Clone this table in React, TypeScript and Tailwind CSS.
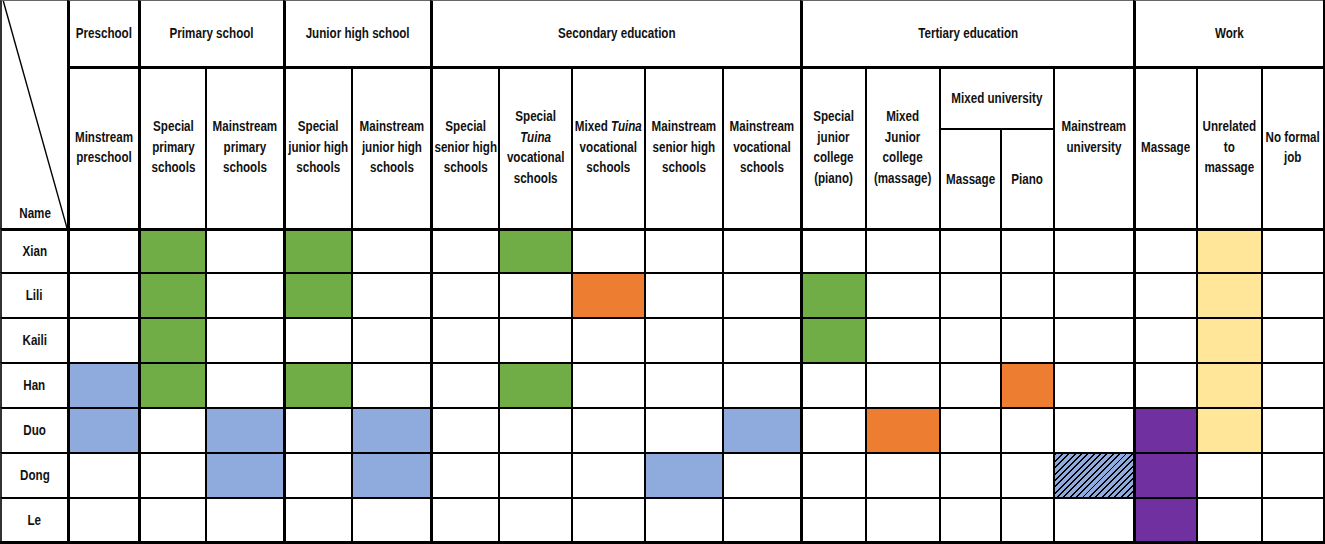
import React from "react";

const VL = [
  "border-l-2 border-l-[#333]",
  "border-l-[3px]",
  "border-l-[3px]",
  "border-l-2",
  "border-l-[3px]",
  "border-l-2",
  "border-l-[3px]",
  "border-l-2",
  "border-l-2",
  "border-l-2",
  "border-l-2",
  "border-l-[3px]",
  "border-l-2",
  "border-l-2",
  "border-l-2",
  "border-l-2",
  "border-l-[3px]",
  "border-l-2",
  "border-l-2",
];

const FILL: Record<string, string> = {
  g: "bg-[#70ad47]",
  b: "bg-[#8faadc]",
  o: "bg-[#ed7d31]",
  y: "bg-[#ffe699]",
  p: "bg-[#7030a0]",
  h: "bg-[repeating-linear-gradient(135deg,#000_0px,#000_1.4px,#8faadc_1.4px,#8faadc_4.5px)]",
};

const rows: { name: string; cells: Record<number, string> }[] = [
  { name: "Xian", cells: { 2: "g", 4: "g", 7: "g", 17: "y" } },
  { name: "Lili", cells: { 2: "g", 4: "g", 8: "o", 11: "g", 17: "y" } },
  { name: "Kaili", cells: { 2: "g", 11: "g", 17: "y" } },
  { name: "Han", cells: { 1: "b", 2: "g", 4: "g", 7: "g", 14: "o", 17: "y" } },
  { name: "Duo", cells: { 1: "b", 3: "b", 5: "b", 10: "b", 12: "o", 16: "p", 17: "y" } },
  { name: "Dong", cells: { 3: "b", 5: "b", 9: "b", 15: "h", 16: "p" } },
  { name: "Le", cells: { 16: "p" } },
];

const txt = "font-bold text-[14px] leading-[20.5px] text-[#111] text-center whitespace-nowrap";

function T({ children }: { children: React.ReactNode }) {
  return <div className="scale-x-[0.83] origin-center">{children}</div>;
}

function Sub({ l, children, extra = "pb-[3px]" }: { l: string; children: React.ReactNode; extra?: string }) {
  return (
    <div className={`row-span-2 border-t-[3px] border-black ${l} flex items-center justify-center ${txt} ${extra}`}>
      <T>{children}</T>
    </div>
  );
}

function G({ span, children }: { span: string; children: React.ReactNode }) {
  return (
    <div className={`${span} border-t border-t-[#666] border-l-[3px] border-black flex items-center justify-center ${txt}`}>
      <T>{children}</T>
    </div>
  );
}

export default function App() {
  return (
    <div
      className="w-[1325px] h-[544px] bg-white grid grid-cols-[67px_71px_67px_78px_68px_79px_68px_73px_73px_78px_78px_65px_74px_61px_53px_80px_63px_65px_62px] grid-rows-[66px_62px_100px_44px_45px_45px_45px_45px_45px_44px] border-r-2 border-b-[3px] border-black"
      style={{ fontFamily: '"Liberation Sans", Arial, sans-serif' }}
    >
      {/* corner */}
      <div className="row-span-3 relative border-t border-t-[#666] border-l-2 border-l-[#333] border-black flex items-end justify-center pb-[5px]">
        <svg className="absolute inset-0 w-full h-full" viewBox="0 0 100 100" preserveAspectRatio="none">
          <line x1="2" y1="0" x2="100" y2="100" stroke="#000" strokeWidth="1.4" vectorEffect="non-scaling-stroke" />
        </svg>
        <span className={`${txt} relative pl-[2px]`}>
          <T>Name</T>
        </span>
      </div>
      {/* group headers */}
      <G span="col-span-1">Preschool</G>
      <G span="col-span-2">Primary school</G>
      <G span="col-span-2">Junior high school</G>
      <G span="col-span-5">Secondary education</G>
      <G span="col-span-5">Tertiary education</G>
      <G span="col-span-3">Work</G>

      {/* sub headers */}
      <Sub l="border-l-[3px]">Minstream<br />preschool</Sub>
      <Sub l="border-l-[3px]">Special<br />primary<br />schools</Sub>
      <Sub l="border-l-2">Mainstream<br />primary<br />schools</Sub>
      <Sub l="border-l-[3px]">Special<br />junior high<br />schools</Sub>
      <Sub l="border-l-2">Mainstream<br />junior high<br />schools</Sub>
      <Sub l="border-l-[3px]">Special<br />senior high<br />schools</Sub>
      <Sub l="border-l-2">Special<br /><i>Tuina</i><br />vocational<br />schools</Sub>
      <Sub l="border-l-2">Mixed <i>Tuina</i><br />vocational<br />schools</Sub>
      <Sub l="border-l-2">Mainstream<br />senior high<br />schools</Sub>
      <Sub l="border-l-2">Mainstream<br />vocational<br />schools</Sub>
      <Sub l="border-l-[3px]">Special<br />junior<br />college<br />(piano)</Sub>
      <Sub l="border-l-2">Mixed<br />Junior<br />college<br />(massage)</Sub>
      <div className={`col-span-2 border-t-[3px] border-l-2 border-black flex items-center justify-center ${txt}`}>
        <T>Mixed university</T>
      </div>
      <Sub l="border-l-2" extra="pb-[24px]">Mainstream<br />university</Sub>
      <Sub l="border-l-[3px]">Massage</Sub>
      <Sub l="border-l-2">Unrelated<br />to<br />massage</Sub>
      <Sub l="border-l-2">No formal<br />job</Sub>
      <div className={`border-t-2 border-l-2 border-black flex items-center justify-center ${txt}`}>
        <T>Massage</T>
      </div>
      <div className={`border-t-2 border-l-2 border-black flex items-center justify-center ${txt}`}>
        <T>Piano</T>
      </div>

      {/* data */}
      {rows.map((r, ri) =>
        Array.from({ length: 19 }, (_, ci) => {
          const top = ri === 0 ? "border-t-[3px]" : "border-t-2";
          const fill = r.cells[ci] ? FILL[r.cells[ci]] : "";
          return (
            <div
              key={`${ri}-${ci}`}
              className={`${top} ${VL[ci]} border-black ${fill} ${ci === 0 ? `flex items-center justify-center ${txt}` : ""}`}
            >
              {ci === 0 ? <T>{r.name}</T> : null}
            </div>
          );
        })
      )}
    </div>
  );
}
